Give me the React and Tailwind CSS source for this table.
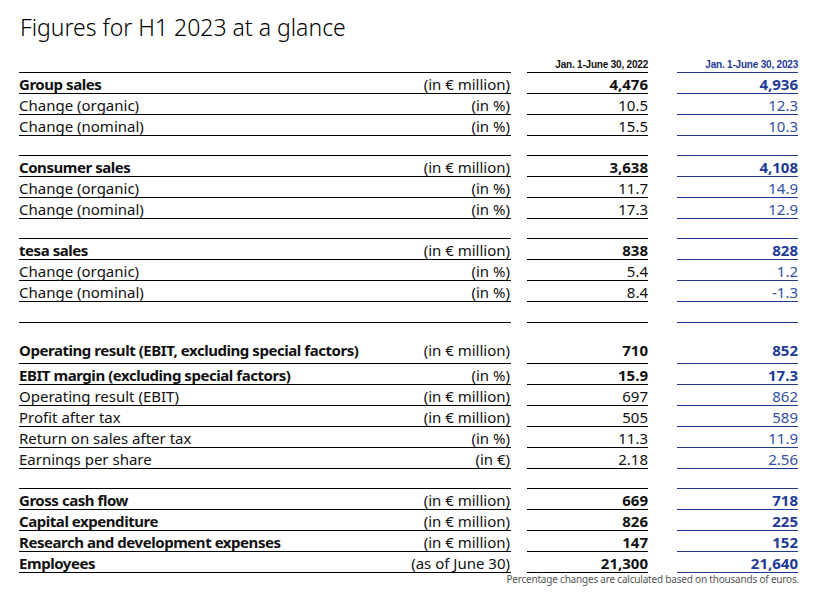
import React from "react";

const BLUE = "text-[#1e3a96]";

const sections = [
    {
        mt: "mt-0",
        rows: [
            { label: "Group sales", unit: "(in € million)", a: "4,476", b: "4,936", bold: true },
            { label: "Change (organic)", unit: "(in %)", a: "10.5", b: "12.3" },
            { label: "Change (nominal)", unit: "(in %)", a: "15.5", b: "10.3" },
        ],
    },
    {
        mt: "mt-[19px]",
        rows: [
            { label: "Consumer sales", unit: "(in € million)", a: "3,638", b: "4,108", bold: true },
            { label: "Change (organic)", unit: "(in %)", a: "11.7", b: "14.9" },
            { label: "Change (nominal)", unit: "(in %)", a: "17.3", b: "12.9" },
        ],
    },
    {
        mt: "mt-[19px]",
        rows: [
            { label: "tesa sales", unit: "(in € million)", a: "838", b: "828", bold: true },
            { label: "Change (organic)", unit: "(in %)", a: "5.4", b: "1.2" },
            { label: "Change (nominal)", unit: "(in %)", a: "8.4", b: "-1.3" },
        ],
    },
    {
        mt: "mt-[20px]",
        rows: [
            { label: "Operating result (EBIT, excluding special factors)", unit: "(in € million)", a: "710", b: "852", bold: true, tall: true },
            { label: "EBIT margin (excluding special factors)", unit: "(in %)", a: "15.9", b: "17.3", bold: true },
            { label: "Operating result (EBIT)", unit: "(in € million)", a: "697", b: "862" },
            { label: "Profit after tax", unit: "(in € million)", a: "505", b: "589" },
            { label: "Return on sales after tax", unit: "(in %)", a: "11.3", b: "11.9" },
            { label: "Earnings per share", unit: "(in €)", a: "2.18", b: "2.56" },
        ],
    },
    {
        mt: "mt-[19px]",
        rows: [
            { label: "Gross cash flow", unit: "(in € million)", a: "669", b: "718", bold: true },
            { label: "Capital expenditure", unit: "(in € million)", a: "826", b: "225", bold: true },
            { label: "Research and development expenses", unit: "(in € million)", a: "147", b: "152", bold: true },
            { label: "Employees", unit: "(as of June 30)", a: "21,300", b: "21,640", bold: true },
        ],
    },
];

const Row = ({ row }) => {
    const h = row.tall ? "h-[41px] pb-[5px]" : "h-[21px] pb-[1px]";
    const weight = row.bold ? "font-bold" : "font-normal";
    return (
        <div className="flex">
            <div className={`w-[492px] flex justify-between items-end border-b border-black leading-none ${h}`}>
                <span className={row.bold ? "font-bold tracking-[-0.45px]" : "font-normal"}>{row.label}</span>
                <span className="pr-[1px]">{row.unit}</span>
            </div>
            <div className="w-[16px]" />
            <div className={`w-[121px] flex justify-end items-end border-b border-black leading-none ${h} ${weight}`}>
                {row.a}
            </div>
            <div className="w-[29px]" />
            <div className={`w-[121px] flex justify-end items-end border-b border-[#1e3a96] leading-none ${h} ${weight} ${row.bold ? "text-[#1e3a96]" : "text-[#3450a4]"}`}>
                {row.b}
            </div>
        </div>
    );
};

const Section = ({ section }) => (
    <div className={section.mt}>
        <div className="flex h-[1px]">
            <div className="w-[492px] bg-black" />
            <div className="w-[16px]" />
            <div className="w-[121px] bg-black" />
            <div className="w-[29px]" />
            <div className="w-[121px] bg-[#1e3a96]" />
        </div>
        {section.rows.map((row, i) => (
            <Row key={i} row={row} />
        ))}
    </div>
);

export default function App() {
    return (
        <div className="w-[823px] h-[602px] bg-white text-[#111] pl-[19px] overflow-hidden" style={{ fontFamily: '"Noto Sans", "Open Sans", sans-serif' }}>
            <h1 className="pt-[12px] h-[48px] text-[23px] font-light leading-[30px] text-black pl-[1px]">
                Figures for H1 2023 at a glance
            </h1>
            <div className="flex h-[24px] items-center text-[10px] font-bold tracking-[-0.2px]" style={{ fontFamily: '"Liberation Sans Narrow", "Liberation Sans", sans-serif' }}>
                <div className="w-[492px]" />
                <div className="w-[16px]" />
                <div className="w-[121px] text-right pt-[8px]">Jan. 1-June 30, 2022</div>
                <div className="w-[29px]" />
                <div className={`w-[121px] text-right pt-[8px] ${BLUE}`}>Jan. 1-June 30, 2023</div>
            </div>
            <div className="text-[15px]">
                {sections.map((s, i) => (
                    <Section key={i} section={s} />
                ))}
            </div>
            <div className="w-[780px] text-right text-[10px] tracking-[-0.2px] leading-[12px] text-[#555]">
                Percentage changes are calculated based on thousands of euros.
            </div>
        </div>
    );
}
